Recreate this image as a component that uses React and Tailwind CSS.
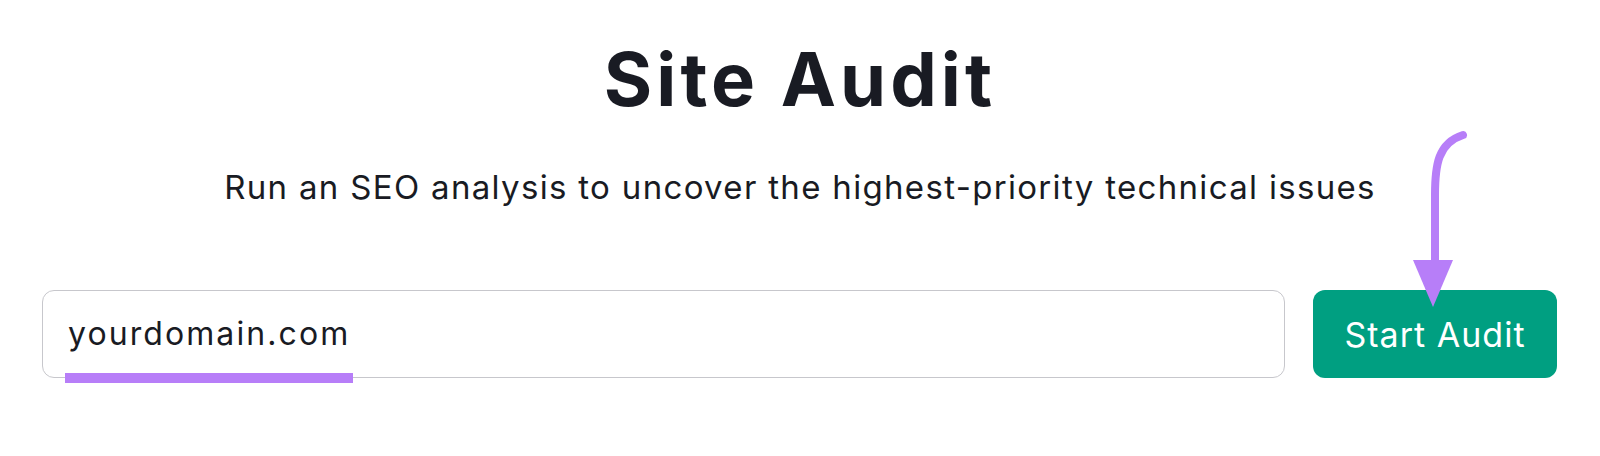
export default function App() {
  return (
    <div className="w-[1600px] h-[456px] bg-white flex flex-col items-center" style={{ fontFamily: "Inter, 'Liberation Sans', sans-serif" }}>
      <h1 className="mt-[42px] text-[74px] leading-none font-bold text-[#191b23] tracking-[0.055em]">Site Audit</h1>
      <p className="mt-[55px] text-[33px] leading-none text-[#191b23] tracking-[0.04em]">Run an SEO analysis to uncover the highest-priority technical issues</p>
      <div className="mt-[86px] w-full flex gap-[28px] pl-[42px] pr-[43px]">
        <div className="relative flex-1 h-[88px] rounded-[12px] border-[1.5px] border-[#c7c7cc] flex items-center pl-[25px]">
          <span className="text-[32px] leading-none text-[#191b23] tracking-[0.065em]">yourdomain.com</span>
          <div className="absolute left-[21.5px] top-[81.5px] w-[288px] h-[10px] bg-[#b77ef8]" />
        </div>
        <div className="relative">
          <button className="w-[244px] h-[88px] rounded-[12px] bg-[#009f81] text-white text-[34px] font-normal tracking-[0.03em]">Start Audit</button>
          <svg className="absolute" style={{ left: 90, top: -165 }} width="70" height="185" viewBox="0 0 70 185">
            <path d="M60 10 C 35 18, 32 40, 32 70 L 32 135" fill="none" stroke="#b77ef8" strokeWidth="8" strokeLinecap="round" />
            <path d="M10 135 L 50 135 L 30 182 Z" fill="#b77ef8" />
          </svg>
        </div>
      </div>
    </div>
  );
}
